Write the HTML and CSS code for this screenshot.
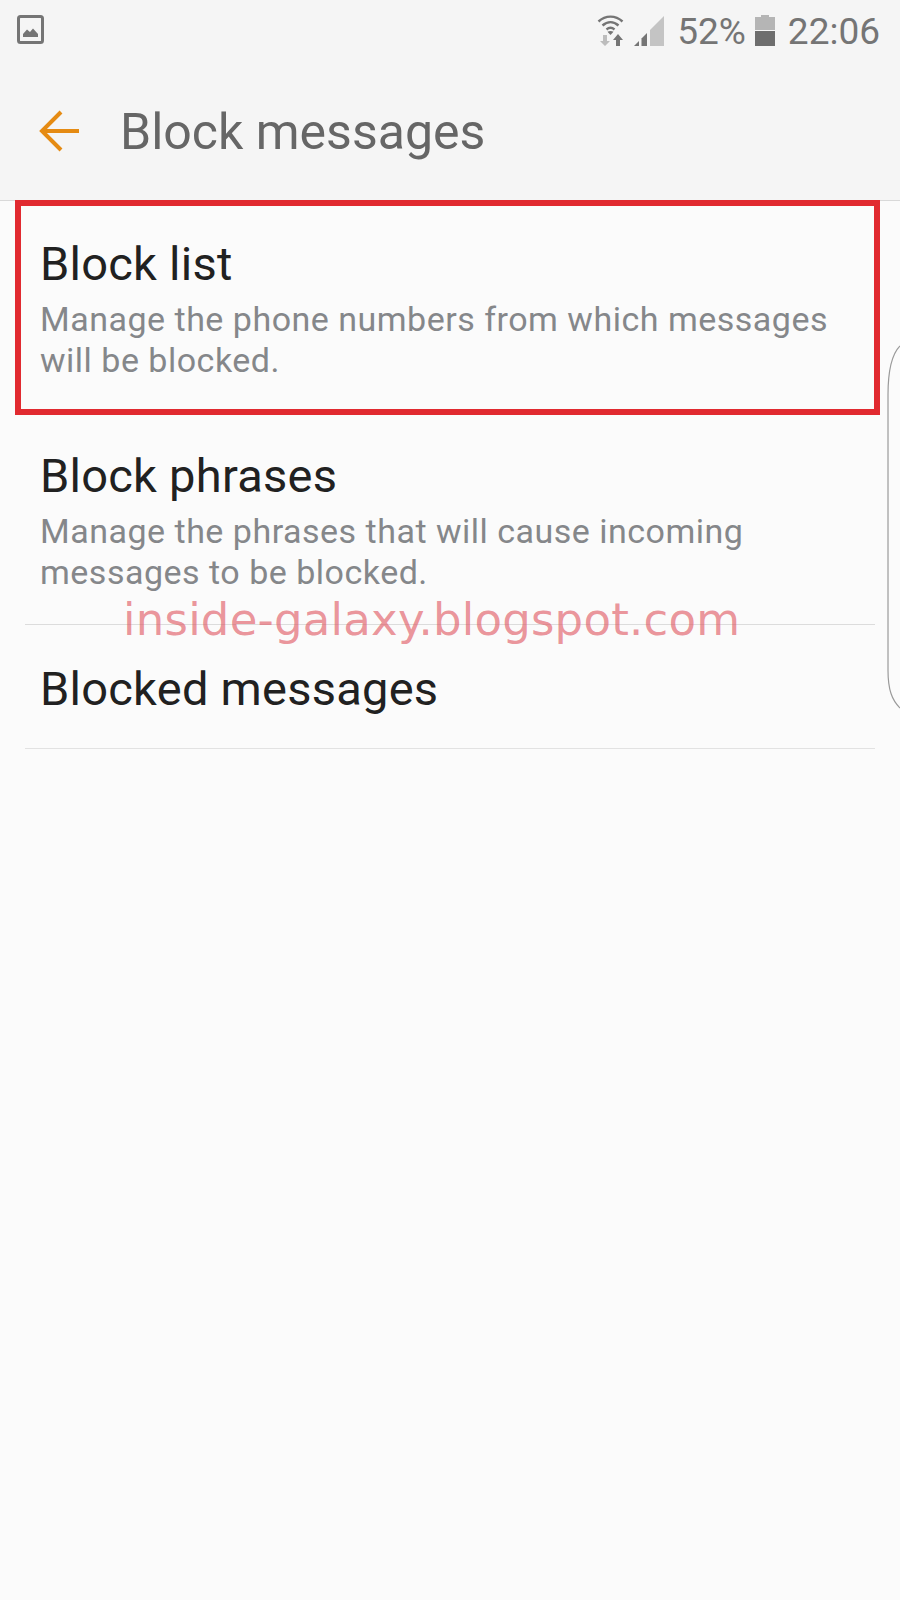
FILE: index.html
```html
<!DOCTYPE html>
<html lang="en">
<head>
<meta charset="utf-8">
<title>Block messages</title>
<link rel="stylesheet" href="styles.css">
</head>
<body>
<div class="screen">
  <header class="top">
    <div class="status">
      <svg class="ic-image" width="28" height="30" viewBox="0 0 28 30">
        <rect x="1.5" y="1.5" width="24" height="26" rx="2" fill="none" stroke="#757575" stroke-width="3"/>
        <path d="M6 22 L6 19 L10 14.5 L13 17 L16 13.5 L21 19 L21 22 Z" fill="#757575"/>
      </svg>
      <div class="status-right">
        <svg class="ic-wifi" width="27" height="32" viewBox="0 0 27 32">
          <path d="M1.5 7.5 C8.5 1 18.5 1 25.5 7.5" fill="none" stroke="#757575" stroke-width="2.4"/>
          <path d="M5.5 11.5 C10.5 7 16.5 7 21.5 11.5" fill="none" stroke="#757575" stroke-width="2.4"/>
          <path d="M9.5 15.5 C12 13.4 15 13.4 17.5 15.5" fill="none" stroke="#757575" stroke-width="2.4"/>
          <path d="M13.5 21 L10.5 17.8 C12.3 16.6 14.7 16.6 16.5 17.8 Z" fill="#757575"/>
          <path d="M6 21 h4 v6 h3 l-5 5 l-5 -5 h3 Z" fill="#bdbdbd"/>
          <path d="M19 32 h4 v-6 h3 l-5 -6 l-5 6 h3 Z" fill="#757575"/>
        </svg>
        <svg class="ic-signal" width="32" height="31" viewBox="0 0 32 31">
          <path d="M1 31 L6 26 L6 31 Z" fill="#757575"/>
          <path d="M8.5 31 L8.5 23.5 L14 18 L14 31 Z" fill="#757575"/>
          <path d="M17 31 L17 15 L31 1 L31 31 Z" fill="#c4c4c4"/>
        </svg>
        <span class="pct">52%</span>
        <svg class="ic-batt" width="20" height="31" viewBox="0 0 20 31">
          <path d="M6 0 H14 V2 H20 V15 H0 V2 H6 Z" fill="#b5b5b5"/>
          <rect x="0" y="16" width="20" height="15" fill="#6e6e6e"/>
        </svg>
        <span class="clock">22:06</span>
      </div>
    </div>
    <div class="appbar">
      <svg class="ic-back" width="42" height="42" viewBox="0 0 42 42">
        <path d="M40 21 H3 M22 2 L3 21 L22 40" fill="none" stroke="#e58b13" stroke-width="4"/>
      </svg>
      <h1 class="title">Block messages</h1>
    </div>
  </header>
  <main class="list">
    <div class="row row-first">
      <div class="row-title">Block list</div>
      <div class="row-sub">Manage the phone numbers from which messages will be blocked.</div>
    </div>
    <div class="row row-second">
      <div class="row-title">Block phrases</div>
      <div class="row-sub">Manage the phrases that will cause incoming messages to be blocked.</div>
    </div>
    <div class="row row-third">
      <div class="row-title">Blocked messages</div>
    </div>
    <div class="highlight"></div>
    <div class="watermark">inside-galaxy.blogspot.com</div>
  </main>
  <svg class="edge" width="14" height="364" viewBox="0 0 14 364">
    <path d="M13 1 C5 9 1 26 1 50 L1 325 C1 345 5 355 13 363" fill="none" stroke="#9a9a9a" stroke-width="1.2"/>
  </svg>
</div>
</body>
</html>
```
FILE: styles.css
```css
* { box-sizing: border-box; }
html, body { margin: 0; padding: 0; }
body { font-family: Roboto, "Liberation Sans", sans-serif; background: #fbfbfb; }
.screen { position: relative; width: 900px; height: 1600px; overflow: hidden; background: #fbfbfb; }
.top { height: 201px; background: #f5f5f5; border-bottom: 1px solid #d9d9d9; }
.status { height: 60px; display: flex; align-items: center; justify-content: space-between; padding: 3px 20px 0 17px; }
.status-right { display: flex; align-items: center; }
.ic-image { margin-top: -3px; }
.ic-wifi { margin-right: 9px; }
.ic-wifi, .ic-signal, .ic-batt { margin-top: -3px; }
.pct { margin-left: 12px; font-size: 37px; color: #757575; line-height: 57px; }
.ic-batt { margin-left: 9px; }
.clock { margin-left: 13px; font-size: 37px; color: #757575; line-height: 57px; }
.appbar { height: 140px; display: flex; align-items: center; padding-top: 2px; padding-left: 39px; }
.title { margin: 2px 0 0 39px; font-size: 50px; font-weight: 400; color: #666666; line-height: 60px; }
.list { position: relative; padding: 0 25px; }
.row { padding: 38px 0 32px; }
.row-first { height: 212px; }
.row-second { padding-bottom: 31px; }
.row-third { padding: 39px 0 34px; border-top: 1px solid #dcdcdc; border-bottom: 1px solid #e2e2e2; }
.row-title { margin-left: 15px; font-size: 47px; letter-spacing: 0.25px; line-height: 50px; color: #212121; }
.row-sub { margin: 10px 0 0 15px; width: 810px; font-size: 34px; letter-spacing: 0.5px; line-height: 41px; color: #85878a; }
.highlight { position: absolute; left: 15px; top: -1px; width: 865px; height: 215px; border: 6px solid #e12a30; }
.watermark { position: absolute; left: 123px; top: 389px; font-family: "DejaVu Sans", sans-serif; font-size: 45px; letter-spacing: 0.22px; line-height: 60px; color: rgba(224, 90, 100, 0.65); white-space: nowrap; }
.edge { position: absolute; right: -1px; top: 345px; }
```
